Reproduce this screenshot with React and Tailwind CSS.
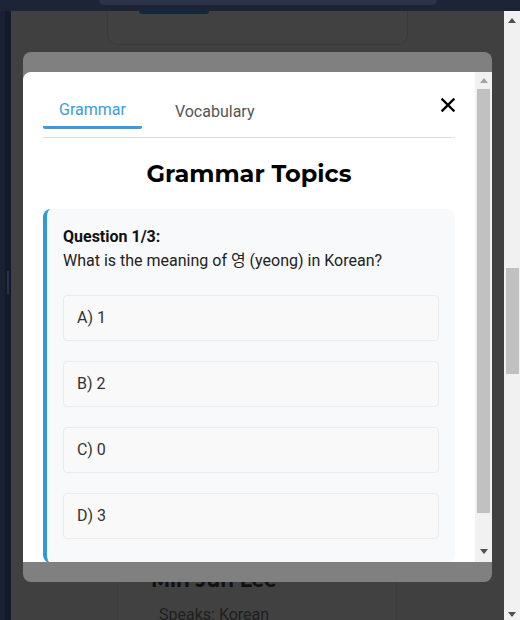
const options = ["A) 1", "B) 2", "C) 0", "D) 3"];

const ArrowUp = ({ color }) => (
  <svg width="8" height="5" viewBox="0 0 8 5">
    <path d="M0 5 L4 0 L8 5 Z" fill={color} />
  </svg>
);

const ArrowDown = ({ color }) => (
  <svg width="8" height="5" viewBox="0 0 8 5">
    <path d="M0 0 L8 0 L4 5 Z" fill={color} />
  </svg>
);

const CloseIcon = () => (
  <svg width="14" height="14" viewBox="0 0 14 14">
    <path d="M1.5 1.5 L12.5 12.5 M12.5 1.5 L1.5 12.5" stroke="#000" strokeWidth="2.4" strokeLinecap="square" />
  </svg>
);

export default function App() {
  return (
    <div className="relative flex h-[620px] w-[520px] flex-col overflow-hidden bg-[#404040] font-['Roboto',sans-serif]">
      {/* fixed top nav */}
      <div className="flex h-[11px] shrink-0 bg-[#1d2437]">
        <div className="ml-[99px] h-[5px] w-[338px] rounded-b-md bg-[#2b3249]" />
      </div>

      <div className="flex min-h-0 flex-1">
        {/* sidebar strip */}
        <div className="flex w-[11px] shrink-0">
          <div className="w-[5px] bg-[#1b2133]" />
          <div className="w-[6px] bg-[#131a2a] pt-[260px]">
            <div className="ml-[2px] h-[23px] w-[2px] bg-[#2a3047]" />
          </div>
        </div>

        {/* dimmed page */}
        <div className="flex w-[493px] flex-col justify-between">
          <div className="ml-[96px] h-[34px] w-[301px] rounded-b-[10px] border-x border-b border-[#3a3a3a] bg-[#414141]">
            <div className="ml-[31px] h-[3px] w-[70px] rounded-b-sm bg-[#0c2a3b]" />
          </div>
          <div className="ml-[106px] h-[60px] w-[280px] border-x border-[#3b3b3b] bg-[#414141] pl-[33px] pt-[7px]">
            <div className="text-[20px] font-bold leading-[26px] text-[#111] font-['Montserrat','Inter',sans-serif]">
              Min Jun Lee
            </div>
            <div className="mt-[10px] pl-[8px] text-[16px] leading-[24px] text-[#1f1f1f]">Speaks: Korean</div>
          </div>
        </div>

        {/* page scrollbar */}
        <div className="flex w-4 shrink-0 flex-col items-center bg-[#f1f1f1]">
          <div className="mt-[7px]">
            <ArrowUp color="#505050" />
          </div>
          <div className="mt-[245px] h-[106px] w-[13px] bg-[#c1c1c1]" />
          <div className="mt-auto mb-[3px]">
            <ArrowDown color="#505050" />
          </div>
        </div>
      </div>

      {/* modal */}
      <div className="absolute left-[23px] top-[52px] flex h-[530px] w-[469px] rounded-lg bg-[#808080] py-5">
        <div className="flex w-full overflow-hidden rounded-tl-lg">
          <div className="h-[490px] w-[452px] overflow-hidden bg-white px-5 pt-4">
            <div className="flex justify-between border-b border-[#dddddd] pb-2">
              <div className="flex gap-[17px]">
                <button
                  type="button"
                  className="rounded-[2px] border-b-[3px] border-[#3b9be0] px-4 pt-[10px] pb-[4px] text-[16px] leading-6 text-[#3b9be0]"
                >
                  Grammar
                </button>
                <button type="button" className="px-4 pt-[10px] pb-[4px] text-[16px] leading-6 text-[#555555]">
                  Vocabulary
                </button>
              </div>
              <button type="button" className="mt-[10px] self-start">
                <CloseIcon />
              </button>
            </div>

            <h2 className="mt-5 mb-[19px] text-center text-[24px] font-bold leading-8 text-black font-['Montserrat','Inter',sans-serif]">
              Grammar Topics
            </h2>

            <div className="rounded-lg border-l-4 border-[#3498db] bg-[#f8f9fa] p-4 pb-6">
              <p className="text-[16px] font-bold leading-6 text-[#111]">Question 1/3:</p>
              <p className="text-[16px] leading-6 text-[#222] font-['Roboto','Noto_Sans_CJK_KR',sans-serif]">
                What is the meaning of 영 (yeong) in Korean?
              </p>
              <div className="mt-[22px] flex flex-col gap-5">
                {options.map((o) => (
                  <div
                    key={o}
                    className="h-[46px] rounded border border-[#ebebeb] bg-[#f9f9f9] px-[13px] py-[10px] text-[16px] leading-6 text-[#333]"
                  >
                    {o}
                  </div>
                ))}
              </div>
            </div>
          </div>

          {/* modal scrollbar */}
          <div className="flex w-[17px] flex-col items-center bg-[#f1f1f1]">
            <div className="mt-[6px]">
              <ArrowUp color="#a3a3a3" />
            </div>
            <div className="mt-[6px] h-[424px] w-[13px] bg-[#c1c1c1]" />
            <div className="mt-auto mb-[8px]">
              <ArrowDown color="#505050" />
            </div>
          </div>
        </div>
      </div>
    </div>
  );
}
